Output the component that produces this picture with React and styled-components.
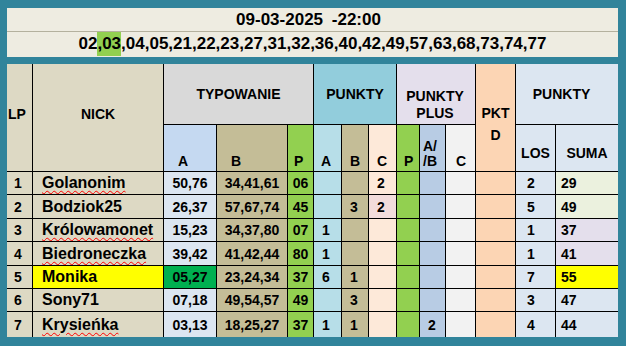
import React from "react";
import styled, { createGlobalStyle } from "styled-components";

const GlobalStyle = createGlobalStyle`
  html, body { margin: 0; padding: 0; background: #31849b; }
  * { box-sizing: border-box; }
`;

const Frame = styled.div`
  width: 626px;
  height: 346px;
  background: #31849b;
  padding: 8px 8px 9px 7px;
  display: flex;
  flex-direction: column;
  gap: 7px;
  font-family: "Liberation Sans", Arial, sans-serif;
  font-weight: 700;
  color: #000;
`;

const TopBox = styled.div`
  background: #eeece1;
  display: flex;
  flex-direction: column;
`;

const DateRow = styled.div`
  height: 24px;
  border-bottom: 1px solid #b4b19e;
  display: flex;
  align-items: center;
  justify-content: center;
  padding-right: 8px;
  font-size: 17px;
  word-spacing: 4px;
`;

const NumbersRow = styled.div`
  height: 25px;
  display: flex;
  align-items: center;
  justify-content: center;
  padding-bottom: 1px;
  font-size: 17px;
  white-space: pre;
`;

const Hit = styled.span`
  background: #92d050;
  display: inline-block;
  line-height: 24px;
`;

const Table = styled.div`
  display: grid;
  grid-template-columns: 25px 130px 52px 70px 25px 27px 26px 27px 22px 25px 29px 39px 39px 62px;
  grid-template-rows: 60px 46px 22px 23px 22px 23px 22px 22px 25px;
  gap: 1px;
  background: #000;
`;

const GroupHead = styled.div`
  grid-column: ${(p) => p.$col};
  grid-row: ${(p) => p.$row || "1"};
  background: ${(p) => p.$bg};
  display: flex;
  flex-direction: column;
  align-items: ${(p) => (p.$left ? "flex-start" : "center")};
  justify-content: ${(p) => p.$justify || "center"};
  text-align: center;
  font-size: 14px;
  line-height: 17px;
  padding: ${(p) => p.$pad || "0"};
`;

const SubHead = styled.div`
  grid-row: 2;
  background: ${(p) => p.$bg};
  display: flex;
  flex-direction: column;
  align-items: ${(p) => (p.$center ? "center" : "flex-start")};
  justify-content: flex-end;
  font-size: 14px;
  line-height: 15px;
  padding-left: ${(p) => p.$pl || 0}px;
  padding-bottom: ${(p) => p.$pb ?? 2}px;
`;

const Cell = styled.div`
  background: ${(p) => p.$bg};
  display: flex;
  align-items: center;
  justify-content: ${(p) => (p.$center ? "center" : "flex-start")};
  padding-left: ${(p) => p.$pl || 0}px;
  font-size: ${(p) => (p.$big ? 16 : 14)}px;
  white-space: nowrap;
  overflow: hidden;
`;

const Nick = styled.span`
  text-decoration: ${(p) => (p.$wavy ? "underline wavy #ff0000" : "none")};
  text-decoration-thickness: 1px;
  text-underline-offset: 2px;
`;

const C = {
  tan: "#ddd9c4",
  gray: "#d9d9d9",
  blueHead: "#c5d9f1",
  blueData: "#dce6f1",
  khaki: "#c4bd97",
  green: "#92d050",
  teal: "#92cddc",
  aqua: "#b7dee8",
  peachLight: "#fde9d9",
  lavender: "#e4dfec",
  steel: "#b8cce4",
  white: "#f2f2f2",
  peach: "#fcd5b4",
  light: "#dce6f1",
  lime: "#ebf1de",
  yellow: "#ffff00",
  darkGreen: "#00b050",
};

const rows = [
  { lp: 1, nick: "Golanonim", wavy: true, a: "50,76", b: "34,41,61", p: "06", pa: "", pb: "", pc: "2", ab: "", los: "2", suma: "29", sumaBg: C.lime },
  { lp: 2, nick: "Bodziok25", a: "26,37", b: "57,67,74", p: "45", pa: "", pb: "3", pc: "2", pcBg: "#f2dcdb", ab: "", los: "5", suma: "49", sumaBg: C.lime },
  { lp: 3, nick: "Królowamonet", wavy: true, a: "15,23", b: "34,37,80", p: "07", pa: "1", pb: "", pc: "", ab: "", los: "1", suma: "37", sumaBg: C.lavender },
  { lp: 4, nick: "Biedroneczka", wavy: true, a: "39,42", b: "41,42,44", p: "80", pa: "1", pb: "", pc: "", ab: "", los: "1", suma: "41", sumaBg: C.lavender },
  { lp: 5, nick: "Monika", nickBg: C.yellow, a: "05,27", aBg: C.darkGreen, b: "23,24,34", p: "37", pa: "6", pb: "1", pc: "", ab: "", los: "7", suma: "55", sumaBg: C.yellow },
  { lp: 6, nick: "Sony71", a: "07,18", b: "49,54,57", p: "49", pa: "", pb: "3", pc: "", ab: "", los: "3", suma: "47", sumaBg: C.light },
  { lp: 7, nick: "Krysieńka", wavy: true, a: "03,13", b: "18,25,27", p: "37", pa: "1", pb: "1", pc: "", ab: "2", los: "4", suma: "44", sumaBg: C.light },
];

export default function App() {
  return (
    <>
      <GlobalStyle />
      <Frame>
        <TopBox>
          <DateRow>09-03-2025 -22:00</DateRow>
          <NumbersRow>
            02<Hit>,03</Hit>,04,05,21,22,23,27,31,32,36,40,42,49,57,63,68,73,74,77
          </NumbersRow>
        </TopBox>
        <Table>
          <GroupHead $col="1" $row="1 / 3" $bg={C.tan} $left $pad="0 0 6px 1px">LP</GroupHead>
          <GroupHead $col="2" $row="1 / 3" $bg={C.tan} $pad="0 0 6px 0">NICK</GroupHead>
          <GroupHead $col="3 / 6" $bg={C.gray}>TYPOWANIE</GroupHead>
          <GroupHead $col="6 / 9" $bg={C.teal}>PUNKTY</GroupHead>
          <GroupHead $col="9 / 12" $bg={C.lavender} $justify="flex-end" $pad="0 2px 2px 0">
            <span>PUNKTY</span>
            <span>PLUS</span>
          </GroupHead>
          <GroupHead $col="12" $row="1 / 3" $bg={C.peach} $justify="flex-start" $pad="41px 0 0 0">
            <span>PKT</span>
            <span style={{ marginTop: 5 }}>D</span>
          </GroupHead>
          <GroupHead $col="13 / 15" $bg={C.light} $pad="0 11px 0 0">PUNKTY</GroupHead>

          <SubHead $bg={C.blueHead} $pl={14}>A</SubHead>
          <SubHead $bg={C.khaki} $pl={14}>B</SubHead>
          <SubHead $bg={C.green} $pl={6}>P</SubHead>
          <SubHead $bg={C.aqua} $pl={7}>A</SubHead>
          <SubHead $bg={C.khaki} $pl={8}>B</SubHead>
          <SubHead $bg={C.peachLight} $pl={8}>C</SubHead>
          <SubHead $bg={C.green} $pl={7}>P</SubHead>
          <SubHead $bg={C.steel} $pl={3}>
            <span>A/</span>
            <span>/B</span>
          </SubHead>
          <SubHead $bg={C.white} $pl={10}>C</SubHead>
          <SubHead $bg={C.light} $center $pb={10}>LOS</SubHead>
          <SubHead $bg={C.light} $center $pb={10}>SUMA</SubHead>

          {rows.map((r) => (
            <React.Fragment key={r.lp}>
              <Cell $bg={C.tan} $pl={7}>{r.lp}</Cell>
              <Cell $bg={r.nickBg || C.tan} $pl={9} $big>
                <Nick $wavy={r.wavy}>{r.nick}</Nick>
              </Cell>
              <Cell $bg={r.aBg || C.blueData} $center>{r.a}</Cell>
              <Cell $bg={C.khaki} $center>{r.b}</Cell>
              <Cell $bg={C.green} $center>{r.p}</Cell>
              <Cell $bg={C.aqua} $pl={8}>{r.pa}</Cell>
              <Cell $bg={C.khaki} $pl={8}>{r.pb}</Cell>
              <Cell $bg={r.pcBg || C.peachLight} $pl={8}>{r.pc}</Cell>
              <Cell $bg={C.green} />
              <Cell $bg={C.steel} $pl={8}>{r.ab}</Cell>
              <Cell $bg={C.white} />
              <Cell $bg={C.peach} />
              <Cell $bg={C.light} $pl={11}>{r.los}</Cell>
              <Cell $bg={r.sumaBg} $pl={5}>{r.suma}</Cell>
            </React.Fragment>
          ))}
        </Table>
      </Frame>
    </>
  );
}
